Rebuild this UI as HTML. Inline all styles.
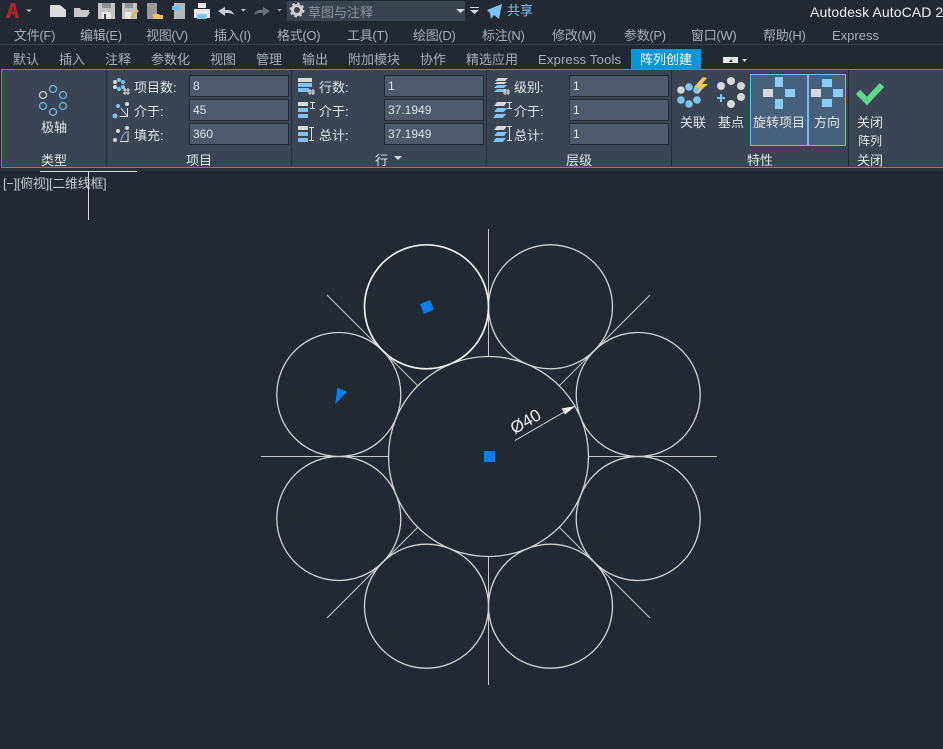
<!DOCTYPE html>
<html lang="zh"><head><meta charset="utf-8"><style>
html,body{margin:0;padding:0;background:#222933;width:943px;height:749px;overflow:hidden}
body{position:relative;font-family:"Liberation Sans","Noto Sans CJK SC",sans-serif}
.t{position:absolute;white-space:nowrap;font-size:13px;line-height:16px;color:#d6dade}
.m{color:#a9aeb4;top:28px;letter-spacing:-.3px}
.tb{color:#a9aeb4;top:52px}
.l{color:#e3e6e9}
.c{transform:translateX(-50%)}
.i{position:absolute;width:98px;height:20px;background:#4e5a6c;border:1px solid #232a35;color:#dfe3e7;font-size:12px;line-height:21px;text-indent:3px;box-sizing:content-box}
.v{position:absolute;width:1px;top:70px;height:97px;background:#262d38}
svg{position:absolute;left:0;top:0}
</style></head><body>

<div style="position:absolute;left:0;top:44px;width:943px;height:1px;background:#3a414c"></div>
<div style="position:absolute;left:287px;top:1px;width:178px;height:20px;background:#3b4350"></div>
<div style="position:absolute;left:1px;top:69px;width:942px;height:99px;background:#3b4453;border-top:1px solid #2a9ad6;border-bottom:1px solid #2a9ad6;border-left:1px solid #2a9ad6;box-sizing:border-box"></div>
<div style="position:absolute;left:0;top:168px;width:943px;height:3px;background:#2b313c"></div>
<div style="position:absolute;left:631px;top:49px;width:70px;height:20px;background:#0696d7"></div>

<div class="v" style="left:106px"></div><div class="v" style="left:291px"></div><div class="v" style="left:486px"></div><div class="v" style="left:671px"></div><div class="v" style="left:848px"></div>

<div style="position:absolute;left:750px;top:74px;width:58px;height:72px;background:#47607c;border:1px solid #6dbcf3;box-sizing:border-box"></div>
<div style="position:absolute;left:808px;top:74px;width:38px;height:72px;background:#47607c;border:1px solid #6dbcf3;box-sizing:border-box"></div>

<div class="t" style="left:308px;top:5px;color:#8c929a">草图与注释</div>
<div class="t" style="left:507px;top:3px;color:#7cc4f8">共享</div>
<div class="t" style="left:810px;top:4px;color:#f0f2f4;font-size:14px;letter-spacing:.1px">Autodesk AutoCAD 2</div>

<div class="t m" style="left:14px">文件(F)</div><div class="t m" style="left:80px">编辑(E)</div><div class="t m" style="left:146px">视图(V)</div><div class="t m" style="left:214px">插入(I)</div><div class="t m" style="left:277px">格式(O)</div><div class="t m" style="left:347px">工具(T)</div><div class="t m" style="left:413px">绘图(D)</div><div class="t m" style="left:482px">标注(N)</div><div class="t m" style="left:552px">修改(M)</div><div class="t m" style="left:624px">参数(P)</div><div class="t m" style="left:691px">窗口(W)</div><div class="t m" style="left:763px">帮助(H)</div><div class="t m" style="left:832px;letter-spacing:0">Express</div>

<div class="t tb" style="left:13px">默认</div><div class="t tb" style="left:59px">插入</div><div class="t tb" style="left:105px">注释</div><div class="t tb" style="left:151px">参数化</div><div class="t tb" style="left:210px">视图</div><div class="t tb" style="left:256px">管理</div><div class="t tb" style="left:302px">输出</div><div class="t tb" style="left:348px">附加模块</div><div class="t tb" style="left:420px">协作</div><div class="t tb" style="left:466px">精选应用</div><div class="t tb" style="left:538px;letter-spacing:.2px">Express Tools</div><div class="t" style="left:640px;top:52px;color:#fff">阵列创建</div>

<div class="t l c" style="left:54px;top:120px">极轴</div>
<div class="t l c" style="left:54px;top:153px">类型</div>
<div class="t l" style="left:134px;top:80px">项目数:</div><div class="t l" style="left:134px;top:104px">介于:</div><div class="t l" style="left:134px;top:128px">填充:</div>
<div class="i" style="left:189px;top:75px">8</div><div class="i" style="left:189px;top:99px">45</div><div class="i" style="left:189px;top:123px">360</div>
<div class="t l c" style="left:199px;top:153px">项目</div>

<div class="t l" style="left:319px;top:80px">行数:</div><div class="t l" style="left:319px;top:104px">介于:</div><div class="t l" style="left:319px;top:128px">总计:</div>
<div class="i" style="left:384px;top:75px">1</div><div class="i" style="left:384px;top:99px">37.1949</div><div class="i" style="left:384px;top:123px">37.1949</div>
<div class="t l" style="left:375px;top:153px">行</div>

<div class="t l" style="left:514px;top:80px">级别:</div><div class="t l" style="left:514px;top:104px">介于:</div><div class="t l" style="left:514px;top:128px">总计:</div>
<div class="i" style="left:569px;top:75px">1</div><div class="i" style="left:569px;top:99px">1</div><div class="i" style="left:569px;top:123px">1</div>
<div class="t l c" style="left:579px;top:153px">层级</div>

<div class="t l c" style="left:693px;top:115px">关联</div><div class="t l c" style="left:731px;top:115px">基点</div><div class="t l c" style="left:779px;top:115px">旋转项目</div><div class="t l c" style="left:827px;top:115px">方向</div>
<div class="t l c" style="left:760px;top:153px">特性</div>
<div class="t l c" style="left:870px;top:115px">关闭</div><div class="t l c" style="left:870px;top:133px;font-size:12px">阵列</div><div class="t l c" style="left:870px;top:153px">关闭</div>

<div class="t" style="left:3px;top:176px;color:#c5c9cd;font-size:13px;letter-spacing:-.3px">[−][俯视][二维线框]</div>

<svg width="943" height="749" viewBox="0 0 943 749">
<!-- title bar -->
<path fill-rule="evenodd" d="M6 18L11 3H15L19 18H15.500L14.700 14H11L9.500 18ZM11.800 11.500H14.200L13 6.500Z" fill="#a8262b"/>
<path d="M26 9.500h6l-3 2.500z" fill="#c8ccd0"/>
<path d="M50 5h10l6 5v7H50z" fill="#dcdcdc"/>
<path d="M74 8h6l1 2h8v2H79l-3 5h-2zM78 12h12l-3 5H75z" fill="#c8c8c8"/>
<path d="M98 3h17v16H98z" fill="#c4c4c4"/><path d="M102 3h9v5h-9z" fill="#8e9298"/><path d="M102 12h9v7h-9z" fill="#e8e8e8"/><path d="M104 14h2v5h-2z" fill="#3b4453"/>
<path d="M122 3h15v16h-15z" fill="#c4c4c4"/><path d="M125 3h8v5h-8z" fill="#8e9298"/><path d="M125 12h6v7h-6z" fill="#e8e8e8"/><path d="M130 17l7-8 2 2-7 7z" fill="#f0b050"/>
<path d="M147 3h10v16h-10z" fill="#9a9a9a"/><path d="M153 14h6l1 1h3v4h-10z" fill="#f0c060"/>
<path d="M174 3h11v16h-11z" fill="#b8b8b8"/><path d="M172 6h5V4l5 4-5 4v-2h-5z" fill="#6cc0f5"/>
<path d="M194 9h16v9h-3v-3h-10v3h-3zM198 3h8v5h-8z" fill="#e8e8e8"/><path d="M197 14h10v5h-10z" fill="#7cc4f8"/>
<path d="M218 11l7-4v3h3c3 0 5 2 6 5-2-1.500-4-2-6-2h-3v3z" fill="#c8ccd0"/><path d="M241 9h5l-2.500 2.500z" fill="#c8ccd0"/>
<path d="M270 11l-7-4v3h-3c-3 0-5 2-6 5 2-1.500 4-2 6-2h3v3z" fill="#6a7078"/><path d="M277 9h5l-2.500 2.500z" fill="#a0a4a8"/>
<circle cx="297" cy="10" r="4.500" fill="none" stroke="#d0d0d0" stroke-width="3"/><circle cx="297" cy="10" r="6.500" fill="none" stroke="#d0d0d0" stroke-width="2" stroke-dasharray="2.500 2.600"/>
<path d="M456 9h9l-4.500 4z" fill="#d8d8d8"/>
<path d="M470 7h9v1h-9zM470 10h9l-4.500 4z" fill="#d8d8d8"/>
<path d="M487 10l15-6-3 15-5-4-3 4-1-6z" fill="#7cc4f8"/>
<!-- tab icon -->
<path d="M723 57h15v6h-15z" fill="#e8e8e8"/><path d="M729 62l2-3 2 3z" fill="#333"/><path d="M742 59h5l-2.500 3z" fill="#ddd"/>
<path d="M394 156h8l-4 4z" fill="#d8dadd"/>
<!-- polar icon -->
<g fill="none" stroke="#6db8ee" stroke-width="1.300"><circle cx="53" cy="89" r="3.500"/><circle cx="63" cy="95" r="3.500"/><circle cx="63" cy="106" r="3.500"/><circle cx="53" cy="112" r="3.500"/><circle cx="43" cy="106" r="3.500"/><circle cx="43" cy="95" r="3.500" stroke="#d0d0d0"/></g>
<!-- items icons -->
<g fill="#7cc4f8"><circle cx="119" cy="80" r="2"/><circle cx="123" cy="82" r="2"/><circle cx="123" cy="87" r="2"/><circle cx="119" cy="89" r="2"/></g>
<g fill="#d8d8d8"><circle cx="115" cy="82" r="2"/><circle cx="115" cy="87" r="2"/></g>
<path d="M125 88v7M128 88v7M123 90h7M123 93h7" stroke="#e0e0e0" stroke-width="1"/>
<circle cx="127" cy="104" r="2" fill="#d8d8d8"/><circle cx="118" cy="106" r="2" fill="#7cc4f8"/><circle cx="115" cy="116" r="2.500" fill="#7cc4f8"/><path d="M121 108l6 8M127.500 108v8.500h-8" stroke="#e0e0e0" fill="none"/>
<circle cx="127" cy="128" r="2" fill="#d8d8d8"/><circle cx="118" cy="131" r="2" fill="#d8d8d8"/><circle cx="115" cy="140" r="2" fill="#d8d8d8"/><path d="M121 140.500q1-6 6-9" stroke="#7cc4f8" fill="none"/><path d="M120 141.500h8v-10" stroke="#e0e0e0" fill="none"/>
<!-- rows icons -->
<path d="M298 78h14v4h-14z" fill="#d8d8d8"/><path d="M298 83h14v4h-14zM298 88h11v4h-11z" fill="#7cc4f8"/>
<path d="M310 89v6M313 89v6M308 91h7M308 93h7" stroke="#e0e0e0"/>
<path d="M298 102h10v4h-10z" fill="#d8d8d8"/><path d="M298 108h10v4h-10zM298 114h10v4h-10z" fill="#7cc4f8"/><path d="M312.500 102v7M310 102.500h5M310 108.500h5" stroke="#e0e0e0" fill="none"/>
<path d="M298 126h10v4h-10z" fill="#d8d8d8"/><path d="M298 132h10v4h-10zM298 138h10v4h-10z" fill="#7cc4f8"/><path d="M311.500 127v14M309 127.500h5M309 140.500h5" stroke="#e0e0e0" fill="none"/>
<!-- levels icons -->
<path d="M495 81l3-3h10l-3 3zM494 84l3-2h10l-3 2z" fill="#d8d8d8"/><path d="M494 88l3-3h10l-3 3zM494 92l3-3h10l-3 3z" fill="#7cc4f8"/><path d="M505 89v6M508 89v6M503 91h7M503 93h7" stroke="#e0e0e0"/>
<path d="M494 106l3-4h10l-3 4z" fill="#d8d8d8"/><path d="M494 112l3-4h10l-3 4zM493 118l3-4h10l-3 4z" fill="#7cc4f8"/><path d="M507 102.500h5M507 108.500h5M509.500 102v7" stroke="#e0e0e0"/>
<path d="M494 130l3-4h10l-3 4z" fill="#d8d8d8"/><path d="M494 136l3-4h10l-3 4zM493 142l3-4h10l-3 4z" fill="#7cc4f8"/><path d="M507 126.500h5M507 140.500h5M509.500 126v15" stroke="#e0e0e0"/>
<!-- associate -->
<g fill="#7cc4f8"><circle cx="689" cy="87" r="3.800"/><circle cx="697" cy="90" r="3.800"/><circle cx="697" cy="100" r="3.800"/><circle cx="689" cy="104" r="3.800"/><circle cx="681" cy="100" r="3.800"/></g><circle cx="681" cy="90" r="3.800" fill="#d8d8d8"/>
<path d="M703 77L694 87L700 87.500L697 94L708 84L702 84L707 78Z" fill="#fbc75f"/>
<!-- base point -->
<g fill="#d8d8d8"><circle cx="731" cy="81" r="4"/><circle cx="721" cy="86" r="4"/><circle cx="741" cy="86" r="4"/><circle cx="741" cy="97" r="4"/><circle cx="731" cy="104" r="4"/></g>
<path d="M717 98h8M721 94v8" stroke="#7cc4f8" stroke-width="2"/>
<!-- rotate -->
<path d="M775 77h8v10h-8zM785 89h10v8h-10zM775 99h8v10h-8z" fill="#87ccfb"/><path d="M763 89h10v8h-10z" fill="#d8d8d8"/>
<path d="M822 79h10v8h-10zM833 89h10v8h-10zM822 99h10v8h-10z" fill="#87ccfb"/><path d="M811 89h10v8h-10z" fill="#d8d8d8"/>
<!-- check -->
<path d="M858 92l9 9 15-16" fill="none" stroke="#5ed88a" stroke-width="6"/>

<!-- crosshair -->
<path d="M40 171.500H137M88.500 171V220" stroke="#d8d8d8" stroke-width="1"/>

<!-- drawing -->
<g fill="none" stroke="#c8c8c8" stroke-width="1">
<path d="M488.500 229V357M488.500 556V685M261 456.500H388M589 456.500H717M327 295L418 386M650 295L559 386M327 618L418 527M650 618L559 527"/>
</g>
<g fill="none" stroke="#d4d4d4" stroke-width="1.300">
<circle cx="488.500" cy="456.500" r="100"/>
<circle cx="550.500" cy="306.800" r="62"/>
<circle cx="338.800" cy="394.500" r="62"/><circle cx="638.200" cy="394.500" r="62"/>
<circle cx="338.800" cy="518.500" r="62"/><circle cx="638.200" cy="518.500" r="62"/>
<circle cx="426.500" cy="606.200" r="62"/><circle cx="550.500" cy="606.200" r="62"/>
</g>
<circle cx="426.500" cy="306.800" r="62" fill="none" stroke="#f0f0f0" stroke-width="1.700"/>
<path d="M515 440.500L565 411.500" stroke="#e0e0e0" stroke-width="1"/>
<path d="M575.500 406L561.500 408.500L565 414.500Z" fill="#f4f4f4"/>
<text x="0" y="0" transform="translate(514.500 434.500) rotate(-30)" font-family="Liberation Sans,sans-serif" font-size="17" fill="#f0f0f0">Ø40</text>
<path d="M484 451h11v11h-11z" fill="#0a7cf2"/>
<path d="M430 300l4 9.300-10 4.700-4-9.700z" fill="#0a7cf2"/>
<path d="M337.300 387.700l9.700 4-11.700 12.300z" fill="#0a7cf2"/>
</svg>
</body></html>
